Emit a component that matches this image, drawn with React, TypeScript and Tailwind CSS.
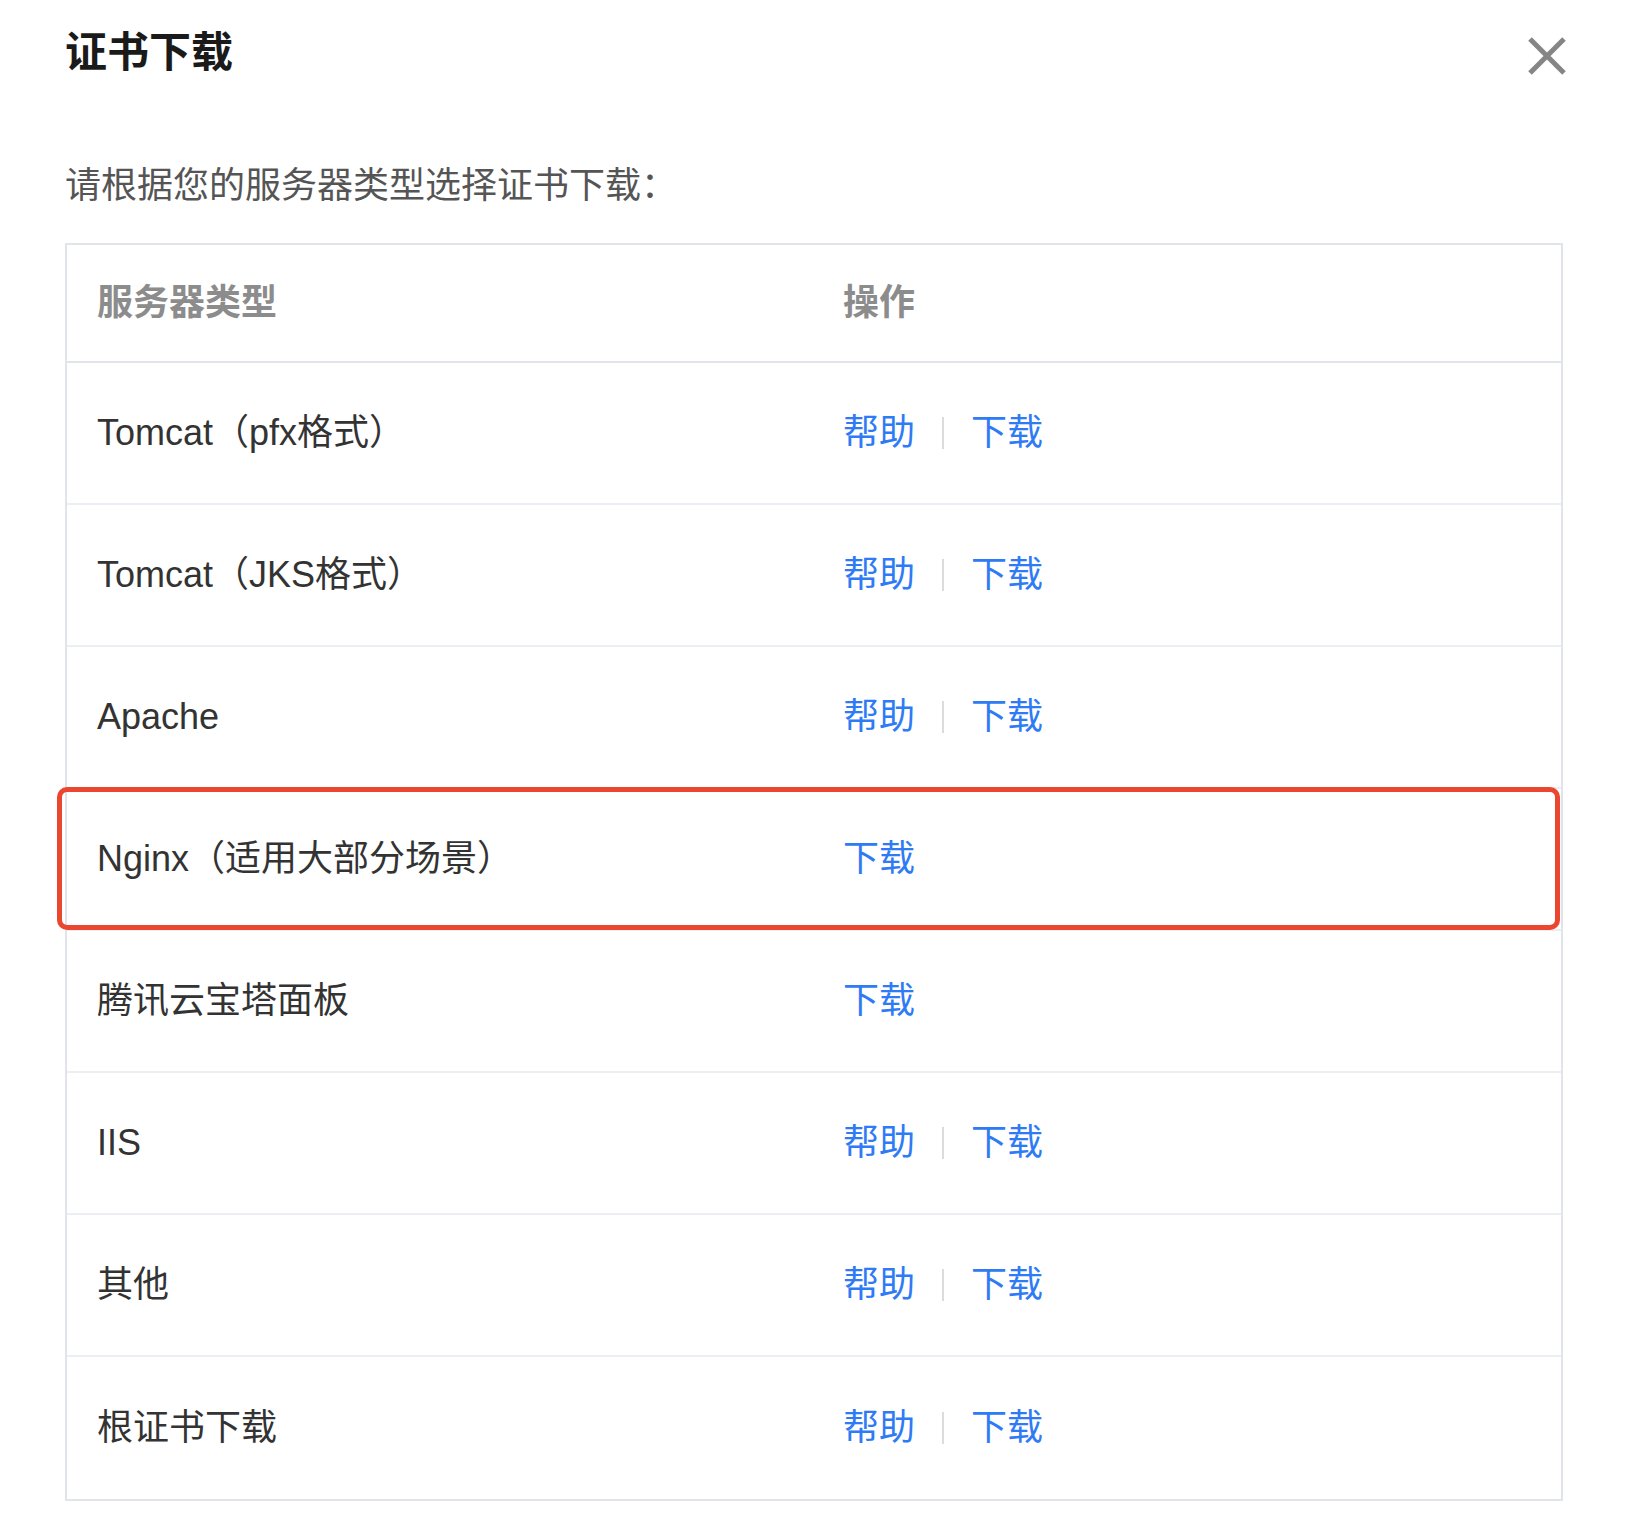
import React from "react";

type Row = { name: string; help: boolean; highlight?: boolean };

const rows: Row[] = [
  { name: "Tomcat（pfx格式）", help: true },
  { name: "Tomcat（JKS格式）", help: true },
  { name: "Apache", help: true },
  { name: "Nginx（适用大部分场景）", help: false, highlight: true },
  { name: "腾讯云宝塔面板", help: false },
  { name: "IIS", help: true },
  { name: "其他", help: true },
  { name: "根证书下载", help: true },
];

const font = {
  fontFamily: '"Liberation Sans", "Noto Sans CJK SC", sans-serif',
};

const CloseIcon = () => (
  <svg width="40" height="40" viewBox="0 0 40 40" className="block">
    <path
      d="M3 3 L37 37 M37 3 L3 37"
      stroke="#858585"
      strokeWidth="5"
      fill="none"
    />
  </svg>
);

const App = () => {
  return (
    <div className="w-[1634px] min-h-[1518px] bg-white" style={font}>
      <div className="pl-[65px] pr-[71px]">
        <div className="flex h-[74px] items-start justify-between pt-[32px]">
          <h1 className="text-[42px] leading-none font-bold text-[#1a1a1a]">
            证书下载
          </h1>
          <button className="mt-[4px] mr-[-4px] cursor-pointer">
            <CloseIcon />
          </button>
        </div>

        <p className="mt-[94px] text-[36px] leading-none text-[#555]">
          请根据您的服务器类型选择证书下载：
        </p>

        <div className="mt-[39px] border-2 border-[#e2e4ec]">
          <div className="flex h-[118px] items-center border-b-2 border-[#e2e4ec] text-[36px] font-bold text-[#8c8c8c]">
            <div className="w-[776px] pl-[30px]">服务器类型</div>
            <div>操作</div>
          </div>

          {rows.map((row, i) => (
            <div
              key={row.name}
              className={
                "relative flex h-[142px] items-center text-[36px] " +
                (i < rows.length - 1 ? "border-b-2 border-[#eceef3]" : "")
              }
            >
              <div className="w-[776px] pl-[30px] text-[#333]">{row.name}</div>
              <div className="flex items-center text-[#2f7bf5]">
                {row.help && (
                  <>
                    <a className="cursor-pointer">帮助</a>
                    <span className="mx-[27px] h-[32px] w-[2px] bg-[#dcdcdc]" />
                  </>
                )}
                <a className="cursor-pointer">下载</a>
              </div>
              {row.highlight && (
                <div className="pointer-events-none absolute top-[-2px] bottom-[-1px] left-[-10px] right-[1px] rounded-[10px] border-[5px] border-[#eb4630]" />
              )}
            </div>
          ))}
        </div>
      </div>
    </div>
  );
};

export default App;
